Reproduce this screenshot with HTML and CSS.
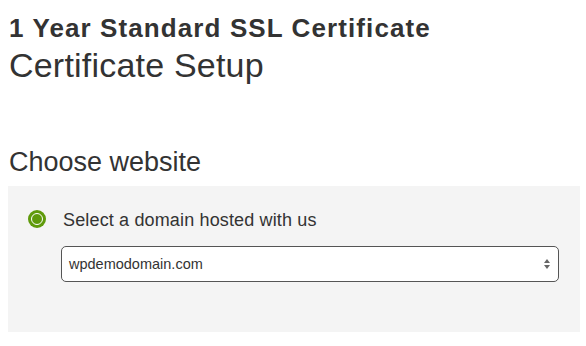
FILE: index.html
```html
<!DOCTYPE html>
<html lang="en">
<head>
    <meta charset="UTF-8">
    <meta name="viewport" content="width=device-width, initial-scale=1.0">
    <title>Certificate Setup</title>
    <link rel="stylesheet" href="styles.css">
</head>
<body>
    <div class="page">
        <h1 class="product">1 Year Standard SSL Certificate</h1>
        <h2 class="title">Certificate Setup</h2>

        <h3 class="section">Choose website</h3>
        <div class="panel">
            <label class="option">
                <span class="radio"><span class="dot"></span></span>
                <span>Select a domain hosted with us</span>
            </label>
            <div class="select">
                <span>wpdemodomain.com</span>
                <svg class="arrows" width="8" height="12" viewBox="0 0 8 12">
                    <path d="M4 1 L7 5 L1 5 Z" fill="#666"/>
                    <path d="M4 11 L7 7 L1 7 Z" fill="#666"/>
                </svg>
            </div>
        </div>
    </div>
</body>
</html>
```

FILE: styles.css
```css
body {
    margin: 0;
    font-family: "Liberation Sans", Arial, Helvetica, sans-serif;
    color: #333;
    background: #fff;
}
.page {
    padding: 14px 6px 0 8px;
}
.product {
    margin: 0;
    padding-left: 1px;
    font-size: 26px;
    line-height: 28px;
    font-weight: bold;
    letter-spacing: 1.1px;
}
.title {
    margin: 5px 0 0;
    padding-left: 1px;
    font-size: 34px;
    line-height: 36px;
    font-weight: normal;
    letter-spacing: 0.2px;
}
.section {
    margin: 63px 0 8px;
    padding-left: 1px;
    font-size: 27px;
    line-height: 32px;
    font-weight: normal;
}
.panel {
    background: #f4f4f4;
    padding: 23px 21px 50px 20px;
}
.option {
    display: flex;
    align-items: center;
    gap: 17px;
    font-size: 18px;
    line-height: 22px;
    letter-spacing: 0.15px;
}
.radio {
    width: 18px;
    height: 18px;
    border-radius: 50%;
    background: #5f9a0b;
    display: flex;
    align-items: center;
    justify-content: center;
    margin-bottom: 3px;
}
.dot {
    width: 10px;
    height: 10px;
    border-radius: 50%;
    background: #5f9a0b;
    border: 1.5px solid #fff;
}
.select {
    margin: 15px 0 0 33px;
    height: 34px;
    border: 1px solid #555;
    border-radius: 5px;
    background: #fff;
    display: flex;
    align-items: center;
    justify-content: space-between;
    padding: 0 7px 0 7px;
    font-size: 14.5px;
}
.arrows {
    display: block;
}
```
